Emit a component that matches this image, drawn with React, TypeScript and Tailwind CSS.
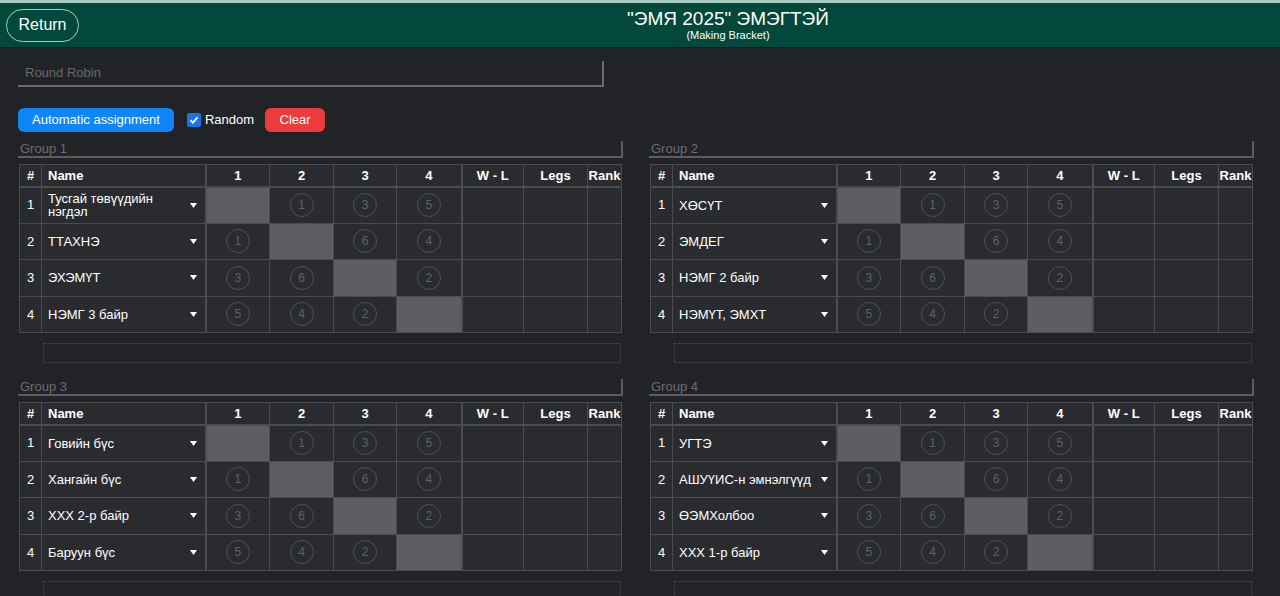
import React from "react";

type Group = { title: string; teams: string[] };

const groups: Group[] = [
  { title: "Group 1", teams: ["Тусгай төвүүдийн нэгдэл", "ТТАХНЭ", "ЭХЭМҮТ", "НЭМГ 3 байр"] },
  { title: "Group 2", teams: ["ХӨСҮТ", "ЭМДЕГ", "НЭМГ 2 байр", "НЭМҮТ, ЭМХТ"] },
  { title: "Group 3", teams: ["Говийн бүс", "Хангайн бүс", "ХХХ 2-р байр", "Баруун бүс"] },
  { title: "Group 4", teams: ["УГТЭ", "АШУҮИС-н эмнэлгүүд", "ӨЭМХолбоо", "ХХХ 1-р байр"] },
];

// match order for a 4-team round robin
const matchNo: number[][] = [
  [0, 1, 3, 5],
  [1, 0, 6, 4],
  [3, 6, 0, 2],
  [5, 4, 2, 0],
];

function Caret() {
  return (
    <svg width="7" height="5" viewBox="0 0 7 5" className="shrink-0">
      <path d="M0 0h7L3.5 5z" fill="#ffffff" />
    </svg>
  );
}

function GroupTable({ group }: { group: Group }) {
  const cell = "border border-[#4b4c50] p-0";
  return (
    <div>
      <div className="h-[17px] border-b-2 border-r-2 border-[#5c5d61] text-[13px] leading-[15px] text-[#6c6d71] pl-[2px]">
        {group.title}
      </div>
      <table className="mt-[6px] ml-[1px] w-[602px] table-fixed border-collapse bg-[#2a2b2f] text-[13px] text-white">
        <colgroup>
          <col className="w-[22px]" />
          <col className="w-[164px]" />
          <col className="w-[64px]" />
          <col className="w-[64px]" />
          <col className="w-[63px]" />
          <col className="w-[65px]" />
          <col className="w-[62px]" />
          <col className="w-[64px]" />
          <col className="w-[34px]" />
        </colgroup>
        <thead>
          <tr className="h-[22px] font-bold">
            <th className={`${cell} border-b-2 text-center`}>#</th>
            <th className={`${cell} border-b-2 border-r-2 text-left pl-[6px]`}>Name</th>
            <th className={`${cell} border-b-2 text-center`}>1</th>
            <th className={`${cell} border-b-2 text-center`}>2</th>
            <th className={`${cell} border-b-2 text-center`}>3</th>
            <th className={`${cell} border-b-2 border-r-2 text-center`}>4</th>
            <th className={`${cell} border-b-2 text-center`}>W - L</th>
            <th className={`${cell} border-b-2 text-center`}>Legs</th>
            <th className={`${cell} border-b-2 text-center`}>Rank</th>
          </tr>
        </thead>
        <tbody>
          {group.teams.map((team, i) => (
            <tr key={team} className="h-[36.5px]">
              <td className={`${cell} text-center`}>{i + 1}</td>
              <td className={`${cell} border-r-2`}>
                <div className="flex items-center justify-between pl-[6px] pr-[8px]">
                  <span className="max-w-[138px] text-[13px] leading-[13px]">{team}</span>
                  <Caret />
                </div>
              </td>
              {matchNo[i].map((m, j) =>
                i === j ? (
                  <td key={j} className={`${cell} bg-[#5d5e62] ${j === 3 ? "border-r-2" : ""}`} />
                ) : (
                  <td key={j} className={`${cell} ${j === 3 ? "border-r-2" : ""}`}>
                    <div className="mx-auto flex h-[24px] w-[24px] items-center justify-center rounded-full border border-[#505155] text-[12px] text-[#606165]">
                      {m}
                    </div>
                  </td>
                )
              )}
              <td className={cell} />
              <td className={cell} />
              <td className={cell} />
            </tr>
          ))}
        </tbody>
      </table>
      <div className="mt-[10px] ml-[25px] mr-[2px] h-[20px] border border-dotted border-[#4b4c50]" />
    </div>
  );
}

export default function App() {
  return (
    <div className="min-h-screen bg-[#222327] font-['Liberation_Sans',Arial,sans-serif]">
      <header className="flex h-[48px] items-center border-t-[3px] border-[#a7cdc1] border-b border-b-[#17181b] bg-[#02493b] pl-[6px]">
        <button className="h-[33px] w-[73px] rounded-full border border-[#a9cdc3] text-[16px] text-white">
          Return
        </button>
        <div className="flex-1 pl-[97px] text-center text-white">
          <div className="text-[19px] leading-[20px]">"ЭМЯ 2025" ЭМЭГТЭЙ</div>
          <div className="text-[11px] leading-[12px]">(Making Bracket)</div>
        </div>
      </header>

      <div className="px-[18px] pt-[13px]">
        <div className="flex h-[26px] w-[586px] items-center border-b-2 border-r-2 border-[#6a6b6e] pl-[7px] text-[13px] text-[#67686c]">
          Round Robin
        </div>

        <div className="mt-[21px] flex h-[24px] items-center">
          <button className="h-[24px] rounded-md bg-[#0f85f7] px-[14px] text-[13px] text-white">
            Automatic assignment
          </button>
          <label className="ml-[13px] flex items-center gap-[4px] text-[13px] text-white">
            <span className="flex h-[14px] w-[14px] items-center justify-center rounded-[2px] bg-[#1a73e8]">
              <svg width="10" height="10" viewBox="0 0 10 10">
                <path d="M1.5 5.2l2.3 2.4L8.6 2.3" stroke="#fff" strokeWidth="1.8" fill="none" />
              </svg>
            </span>
            Random
          </label>
          <button className="ml-[11px] h-[24px] w-[60px] rounded-md bg-[#ec3b3b] text-[13px] text-white">
            Clear
          </button>
        </div>

        <div className="mt-[9px] grid grid-cols-[605px_605px] gap-x-[26px] gap-y-[16px]">
          {groups.map((g) => (
            <GroupTable key={g.title} group={g} />
          ))}
        </div>
      </div>
    </div>
  );
}
